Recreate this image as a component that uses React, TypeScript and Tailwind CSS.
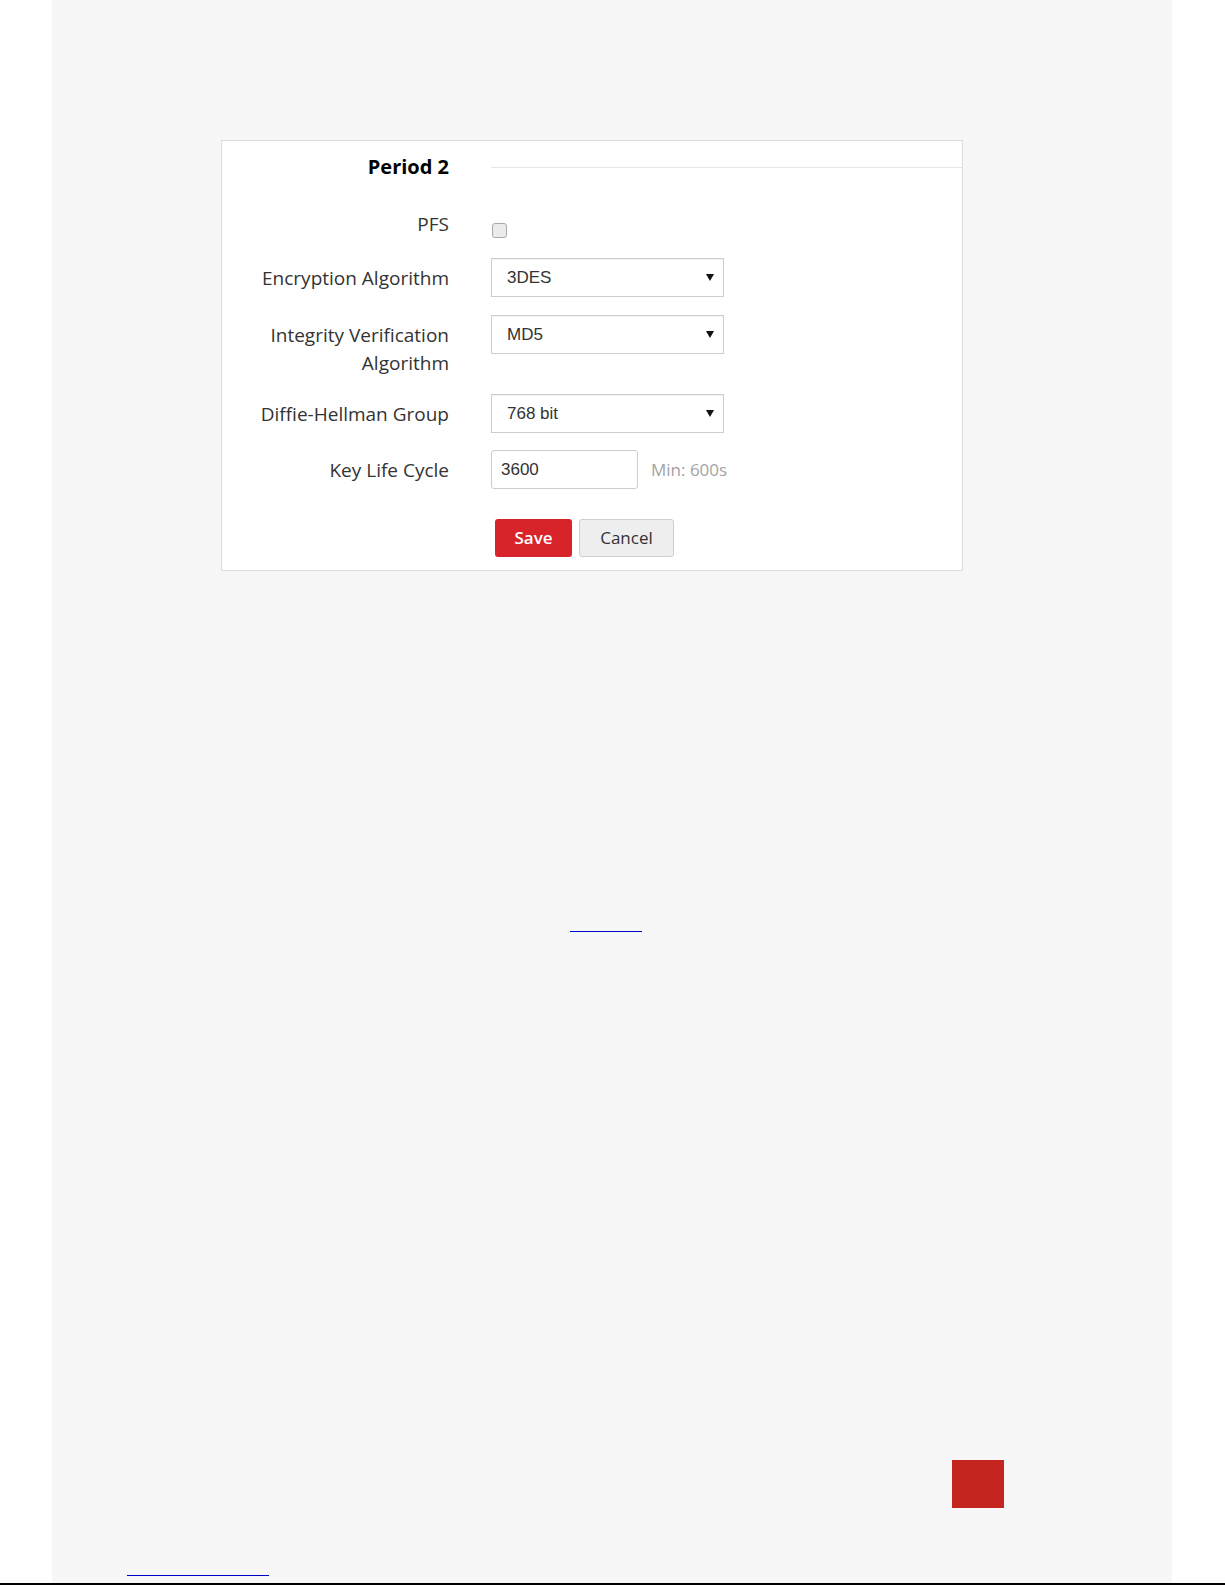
import React from 'react';

// 폼 라벨/컨트롤 공통 스타일
const labelFont = { fontFamily: '"Open Sans", "Noto Sans", sans-serif' };
const fieldFont = { fontFamily: '"Liberation Sans", Arial, sans-serif' };

function Caret() {
  return (
    <svg width="8" height="7" viewBox="0 0 8 7" className="shrink-0">
      <path d="M0 0 H8 L4 7 Z" fill="#111" />
    </svg>
  );
}

function SelectBox({ value }: { value: string }) {
  return (
    <div
      className="w-[233px] h-[39px] border border-[#cdcdcd] bg-white flex items-center justify-between pl-[15px] pr-[9px] text-[17px] text-[#333] shadow-[inset_0_1px_1px_rgba(0,0,0,0.05)]"
      style={fieldFont}
    >
      <span>{value}</span>
      <Caret />
    </div>
  );
}

function Row({
  label,
  children,
  className = '',
}: {
  label: React.ReactNode;
  children: React.ReactNode;
  className?: string;
}) {
  return (
    <div className={`flex items-center ${className}`}>
      <div className="w-[227px] text-right text-[19px] leading-[28px] text-[#333]" style={labelFont}>
        {label}
      </div>
      <div className="ml-[42px] flex items-center">{children}</div>
    </div>
  );
}

export default function App() {
  return (
    <div className="w-[1225px] h-[1585px] bg-white flex flex-col overflow-hidden">
      <div className="ml-[52px] w-[1120px] h-[1583px] bg-[#f7f7f7] flex flex-col">
        {/* 설정 카드 */}
        <div className="mt-[140px] ml-[169px] w-[742px] h-[431px] border border-[#dcdcdc] bg-white flex flex-col">
          {/* 제목 */}
          <div className="h-[52px] flex items-center">
            <div className="w-[227px] text-right text-[20px] font-bold text-black" style={labelFont}>
              Period 2
            </div>
            <div className="ml-[42px] flex-1 h-px bg-[#e6e6e6]" />
          </div>

          {/* PFS */}
          <div className="mt-[17px] h-[48px] flex items-start">
            <div className="w-[227px] text-right text-[19px] leading-[28px] text-[#333]" style={labelFont}>
              PFS
            </div>
            <div className="ml-[43px] mt-[13px] w-[15px] h-[15px] rounded-[3px] border border-[#a8a8a8] bg-[#ebebeb]" />
          </div>

          <Row label="Encryption Algorithm" className="h-[39px]">
            <SelectBox value="3DES" />
          </Row>

          <div className="mt-[18px] flex items-start">
            <div className="w-[227px] mt-[6px] text-right text-[19px] leading-[28px] text-[#333]" style={labelFont}>
              Integrity Verification
              <br />
              Algorithm
            </div>
            <div className="ml-[42px]">
              <SelectBox value="MD5" />
            </div>
          </div>

          <Row label="Diffie-Hellman Group" className="mt-[17px] h-[39px]">
            <SelectBox value="768 bit" />
          </Row>

          <Row label="Key Life Cycle" className="mt-[17px] h-[39px]">
            <input
              readOnly
              value="3600"
              className="w-[147px] h-[39px] border border-[#cdcdcd] rounded-[3px] pl-[9px] text-[17px] text-[#333] outline-none"
              style={fieldFont}
            />
            <span className="ml-[13px] text-[17px] text-[#a3a3a3]" style={labelFont}>
              Min: 600s
            </span>
          </Row>

          {/* 버튼 */}
          <div className="mt-[30px] ml-[273px] flex gap-[7px]">
            <button
              className="w-[77px] h-[38px] rounded-[3px] bg-[#d8232a] text-white text-[17px] font-semibold"
              style={labelFont}
            >
              Save
            </button>
            <button
              className="w-[95px] h-[38px] rounded-[3px] bg-[#eeeeee] border border-[#cfcfcf] text-[#333] text-[17px]"
              style={labelFont}
            >
              Cancel
            </button>
          </div>
        </div>

        {/* 링크 밑줄 */}
        <div className="mt-[360px] ml-[518px] w-[72px] h-px bg-[#0000cc]" />

        {/* 페이지 표시 */}
        <div className="mt-[528px] ml-[900px] w-[52px] h-[48px] bg-[#c4251e]" />

        <div className="mt-[67px] ml-[75px] w-[142px] h-px bg-[#0000cc]" />
      </div>
      <div className="h-[2px] bg-black" />
    </div>
  );
}
